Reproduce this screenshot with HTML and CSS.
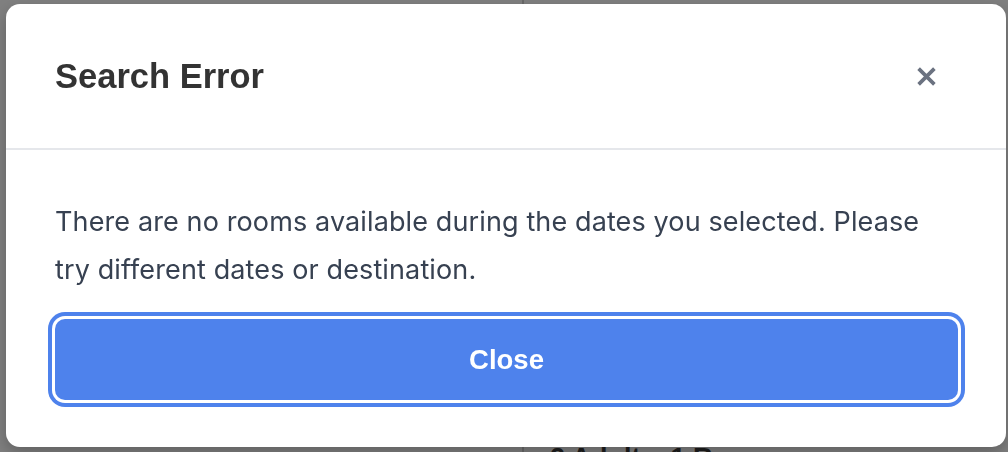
FILE: index.html
```html
<!DOCTYPE html>
<html lang="en">
<head>
    <meta charset="UTF-8">
    <meta name="viewport" content="width=device-width, initial-scale=1.0">
    <title>Search Error</title>
    <link rel="stylesheet" href="styles.css">
</head>
<body>
    <!-- page behind the dialog -->
    <div class="page">
        <div class="page-side"></div>
        <div class="page-main">
            <p class="guests">2 Adults, 1 Room</p>
        </div>
    </div>

    <div class="modal-backdrop">
        <div class="modal" role="dialog" aria-labelledby="modalTitle">
            <div class="modal-header">
                <h2 id="modalTitle">Search Error</h2>
                <button class="modal-close" aria-label="Close">
                    <svg viewBox="0 0 24 24" width="24" height="24">
                        <path d="M3 3 L21 21 M21 3 L3 21" stroke="currentColor" stroke-width="4.2" fill="none"/>
                    </svg>
                </button>
            </div>
            <div class="modal-body">
                <p>There are no rooms available during the dates you selected. Please try different dates or destination.</p>
                <button class="btn-primary">Close</button>
            </div>
        </div>
    </div>
</body>
</html>
```

FILE: styles.css
```css
:root {
    --overlay: #808080;
    --white: #ffffff;
    --title: #333333;
    --text: #374151;
    --muted: #6b7280;
    --line: #e5e7eb;
    --blue: #4e82ec;
}

* {
    margin: 0;
    padding: 0;
    box-sizing: border-box;
}

body {
    background-color: var(--overlay);
    font-family: 'Inter', 'Noto Sans', sans-serif;
    height: 452px;
    overflow: hidden;
}

.page {
    display: flex;
    height: 452px;
}

.page-side {
    width: 524px;
    border-right: 2px solid #6a6a6a;
}

.page-main {
    flex: 1;
    display: flex;
    align-items: flex-end;
    padding-left: 26px;
}

.guests {
    font-family: 'Liberation Sans', Arial, sans-serif;
    font-weight: 700;
    font-size: 27px;
    line-height: 31px;
    color: #1d1d1d;
    margin-bottom: -22px;
}

.modal-backdrop {
    position: fixed;
    top: 0;
    left: 0;
    right: 0;
    bottom: 0;
    display: flex;
    align-items: flex-start;
    padding: 4px 2px 0 6px;
}

.modal {
    width: 1000px;
    background-color: var(--white);
    border-radius: 14px;
    box-shadow: 0 6px 16px rgba(0, 0, 0, 0.25);
    overflow: hidden;
}

.modal-header {
    display: flex;
    align-items: center;
    justify-content: space-between;
    padding: 48px 48px 48px 49px;
    border-bottom: 2px solid var(--line);
}

.modal-header h2 {
    font-family: 'Liberation Sans', Arial, sans-serif;
    font-size: 34.5px;
    line-height: 48px;
    font-weight: 700;
    color: var(--title);
}

.modal-close {
    display: flex;
    align-items: center;
    justify-content: center;
    width: 44px;
    height: 44px;
    margin-right: 10px;
    background: none;
    border: none;
    color: var(--muted);
    cursor: pointer;
}

.modal-close svg {
    width: 21px;
    height: 21px;
}

.modal-body {
    padding: 48px 48px 47px 49px;
}

.modal-body p {
    max-width: 890px;
    font-size: 27px;
    line-height: 48px;
    letter-spacing: 0.12px;
    color: var(--text);
    margin-bottom: 25px;
}

.btn-primary {
    display: block;
    width: 100%;
    padding: 24px 0;
    font-family: 'Liberation Sans', Arial, sans-serif;
    font-size: 27.5px;
    line-height: 33px;
    font-weight: 700;
    color: var(--white);
    background-color: var(--blue);
    border: none;
    border-radius: 10px;
    box-shadow: 0 0 0 3px var(--white), 0 0 0 7px var(--blue);
    cursor: pointer;
}
```
